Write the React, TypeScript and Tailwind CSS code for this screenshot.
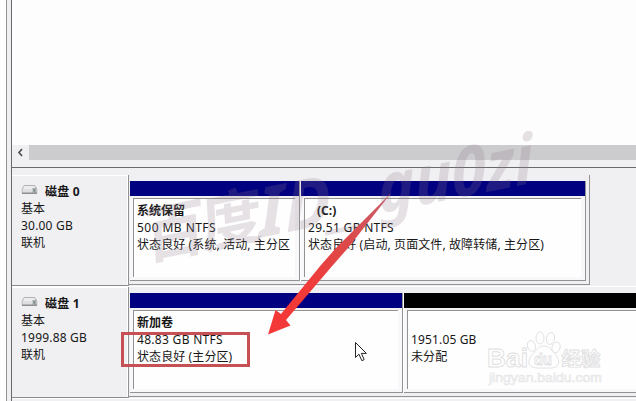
import React from "react";

function DriveIcon() {
  return (
    <svg width="17" height="12" viewBox="0 0 17 12" className="relative -top-[2px] shrink-0">
      <path d="M3.2 2.5h10.6l2 3.5v4H1.2V6z" fill="#ececed" stroke="#a9a9ad" strokeWidth="0.9" />
      <path d="M1.8 6.2h9.4V9.5H1.8z" fill="#dededf" />
      <path d="M11.5 5h3.5v4.5h-3.5z" fill="#a5aaa8" />
      <path d="M1 10.2h15" stroke="#707073" />
      <path d="M13.2 6.5v2" stroke="#62806e" />
    </svg>
  );
}

function DiskLabel({ name, size }: { name: string; size: string }) {
  return (
    <div className="w-[117px] shrink-0 border-r border-b border-r-[#929292] border-b-[#8b8b8b] pl-[2px] shadow-[inset_-1px_0_#fff,inset_0_1px_#fff]">
      <div className="pl-[7px] pt-[7px]">
        <div className="flex h-[17px] items-center gap-[7px] font-bold">
          <DriveIcon />
          <span className="relative top-px whitespace-nowrap tracking-[0.2px]">{name}</span>
        </div>
        <div className="pt-px">基本</div>
        <div className="whitespace-nowrap tracking-[0.2px]">{size}</div>
        <div>联机</div>
      </div>
    </div>
  );
}

type VolumeProps = {
  title?: string;
  size: string;
  status: string;
  width: string;
  bar: string;
  spacing?: string;
  indent?: boolean;
};

function Volume({ title, size, status, width, bar, spacing = "tracking-[0.3px]", indent }: VolumeProps) {
  return (
    <div className={`flex shrink-0 flex-col overflow-hidden border-r border-b border-[#929292] bg-[#f8f7f9] ${width}`}>
      <div className={`h-[15px] shrink-0 ${bar}`} />
      <div className="h-[2px] shrink-0 bg-[#f2f1f3]" />
      <div className="mr-[4px] mb-[3px] ml-[3px] flex-1 overflow-hidden border-t border-l border-[#929292] bg-[#fefefe] pt-[3px] pl-[3px]">
        <div className={`h-[17px] font-bold ${indent ? "pl-[9px]" : ""}`}>{title}</div>
        <div className={`whitespace-nowrap ${spacing}`}>{size}</div>
        <div className="whitespace-nowrap tracking-[0.1px]">{status}</div>
      </div>
    </div>
  );
}

function Watermark() {
  return (
    <svg className="pointer-events-none absolute inset-0" width="636" height="401">
      <g transform="translate(150 260) rotate(-11.4) skewX(-8)" fill="#8b7d87" fillOpacity="0.22" fontWeight="700">
        <text x="-4" y="-1" fontSize="62" fontFamily="'Noto Sans CJK SC', sans-serif" textLength="120">百度</text>
        <g fontSize="68" fontStyle="italic" fontFamily="'Noto Sans', sans-serif">
          <text x="112" y="0" textLength="74" lengthAdjust="spacingAndGlyphs">ID</text>
          <text x="187" y="0" textLength="42" lengthAdjust="spacingAndGlyphs">_</text>
          <text x="234" y="0" textLength="158" lengthAdjust="spacingAndGlyphs">gu0zi</text>
        </g>
      </g>
    </svg>
  );
}

function BaiduMark() {
  return (
    <svg className="pointer-events-none absolute inset-0" width="636" height="401" fill="#fefefe" stroke="#dfdfe1" strokeWidth="0.9">
      <g fontFamily="'Liberation Sans', sans-serif" fontWeight="bold">
        <text x="487" y="367" fontSize="26" textLength="41" lengthAdjust="spacingAndGlyphs">Bai</text>
        <ellipse cx="531.5" cy="346" rx="4" ry="5.5" transform="rotate(-20 531.5 346)" />
        <ellipse cx="540" cy="338" rx="4" ry="6" />
        <ellipse cx="550.5" cy="338.5" rx="4" ry="6" transform="rotate(12 550.5 338.5)" />
        <ellipse cx="556" cy="347.5" rx="4" ry="5.5" transform="rotate(20 556 347.5)" />
        <path d="M544 346c-6 0-8 5-12 9-6 7-3 13 5 13h14c8 0 10-6 5-13-4-4-6-9-12-9z" />
        <text x="534" y="365" fontSize="16" textLength="18" lengthAdjust="spacingAndGlyphs">du</text>
        <text x="561.5" y="366" fontSize="19.5" fontFamily="'Noto Sans CJK SC', sans-serif" textLength="39" lengthAdjust="spacingAndGlyphs">经验</text>
        <text x="489" y="381.5" fontSize="12" fill="#f6f6f7" stroke="#e4e4e6" strokeWidth="0.5" fontWeight="normal" textLength="113" lengthAdjust="spacingAndGlyphs">jingyan.baidu.com</text>
      </g>
    </svg>
  );
}

function Annotations() {
  return (
    <svg className="pointer-events-none absolute inset-0" width="636" height="401">
      <defs>
        <linearGradient id="arrow" x1="391" y1="192" x2="270" y2="335" gradientUnits="userSpaceOnUse">
          <stop stopColor="#c66070" />
          <stop offset="0.35" stopColor="#dc4a4a" />
          <stop offset="0.7" stopColor="#f33938" />
        </linearGradient>
      </defs>
      <path d="M391.5 192.5 348 248 333 265 286 320 290.500 325.500 268 334.500 275.500 310 281 314 321 265 336 248Z" fill="url(#arrow)" />
      <rect x="122.5" y="333.5" width="126" height="32" fill="none" stroke="#c75055" strokeWidth="3" />
      <path d="M355.5 342.5v15l3.4-3.3 3 6.5 2.3-1.1-2.8-6.2h5Z" fill="#fff" stroke="#252525" />
    </svg>
  );
}

export default function App() {
  return (
    <main className="relative flex h-[401px] w-[636px] overflow-hidden bg-[#fdfdfd] font-['Noto_Sans','Noto_Sans_CJK_SC',sans-serif] text-[12px] leading-[17px] text-[#171717]">
      <div className="w-[6px] shrink-0" />
      <div className="w-[6px] shrink-0 border-r border-l border-r-[#69696b] border-l-[#939393] bg-[#efeef1]" />
      <div className="flex min-w-0 flex-1 flex-col">
        <div className="h-[145px] shrink-0" />
        <div className="flex h-[15px] shrink-0 bg-[#f0eff1]">
          <div className="flex w-[17px] items-center justify-center">
            <svg width="7" height="9" viewBox="0 0 7 9"><path d="M5 1 2 4.5 5 8" fill="none" stroke="#515151" strokeWidth="1.7" /></svg>
          </div>
          <div className="flex-1 bg-[#cccbcd]" />
        </div>
        <div className="h-[8px] shrink-0 border-b border-[#69696b] bg-[#f0eff1]" />
        <div className="flex flex-1 flex-col bg-[#f0eff2] pt-[7px]">
          <section className="flex h-[111px] shrink-0">
            <DiskLabel name="磁盘 0" size="30.00 GB" />
            <div className="flex h-[110px] w-[461px] shrink-0 border-r border-b border-[#929292] pt-[6px] pb-[3px] pl-px">
              <Volume title="系统保留" size="500 MB NTFS" status="状态良好 (系统, 活动, 主分区" width="w-[170px]" bar="bg-[#000080]" spacing="tracking-[0.45px]" />
              <div className="w-px shrink-0 bg-white" />
              <Volume title="(C:)" size="29.51 GB NTFS" status="状态良好 (启动, 页面文件, 故障转储, 主分区)" width="w-[285px]" bar="bg-[#000080]" indent />
            </div>
          </section>
          <div className="h-px shrink-0 bg-white" />
          <section className="flex h-[111px] shrink-0">
            <DiskLabel name="磁盘 1" size="1999.88 GB" />
            <div className="flex h-[110px] flex-1 overflow-hidden border-b border-[#929292] pt-[6px] pb-[3px] pl-px">
              <Volume title="新加卷" size="48.83 GB NTFS" status="状态良好 (主分区)" width="w-[273px]" bar="bg-[#000080]" />
              <div className="w-px shrink-0 bg-white" />
              <Volume size="1951.05 GB" status="未分配" width="w-[240px]" bar="bg-black" spacing="tracking-[0.15px]" />
            </div>
          </section>
          <div className="h-px shrink-0 bg-white" />
        </div>
      </div>
      <Watermark />
      <BaiduMark />
      <Annotations />
    </main>
  );
}
